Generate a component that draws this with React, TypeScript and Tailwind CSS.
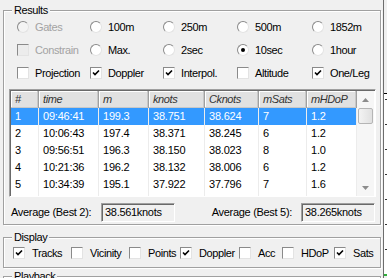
import React from "react";

const font = "font-['Liberation_Sans',Arial,sans-serif]";

const Check = ({ on, disabled }: { on?: boolean; disabled?: boolean }) => (
    <span
        className={`flex h-[12px] w-[12px] shrink-0 items-center justify-center border border-t-[#8a8a8a] border-l-[#8a8a8a] border-b-[#e3e3e3] border-r-[#e3e3e3] ${
            disabled ? "bg-[#ececec]" : "bg-white"
        }`}
    >
        {on && (
            <svg width="8" height="8" viewBox="0 0 8 8">
                <path d="M1 3.5 L3 5.5 L7 1.5" stroke="#000" strokeWidth="1.6" fill="none" />
            </svg>
        )}
    </span>
);

const Radio = ({ on, disabled }: { on?: boolean; disabled?: boolean }) => (
    <span
        className={`flex h-[12px] w-[12px] shrink-0 items-center justify-center rounded-full border border-t-[#8a8a8a] border-l-[#8a8a8a] border-b-[#e3e3e3] border-r-[#e3e3e3] ${
            disabled ? "bg-[#f4f4f4]" : "bg-white"
        }`}
    >
        {on && <span className="h-[4px] w-[4px] rounded-full bg-black" />}
    </span>
);

type Opt = { label: string; kind: "radio" | "check"; on?: boolean; disabled?: boolean };

const options: Opt[] = [
    { label: "Gates", kind: "radio", disabled: true },
    { label: "100m", kind: "radio" },
    { label: "250m", kind: "radio" },
    { label: "500m", kind: "radio" },
    { label: "1852m", kind: "radio" },
    { label: "Constrain", kind: "check", disabled: true },
    { label: "Max.", kind: "radio" },
    { label: "2sec", kind: "radio" },
    { label: "10sec", kind: "radio", on: true },
    { label: "1hour", kind: "radio" },
    { label: "Projection", kind: "check" },
    { label: "Doppler", kind: "check", on: true },
    { label: "Interpol.", kind: "check", on: true },
    { label: "Altitude", kind: "check" },
    { label: "One/Leg", kind: "check", on: true },
];

const columns = [
    { name: "#", w: "w-[28px]" },
    { name: "time", w: "w-[60px]" },
    { name: "m", w: "w-[50px]" },
    { name: "knots", w: "w-[56px]" },
    { name: "Cknots", w: "w-[54px]" },
    { name: "mSats", w: "w-[48px]" },
    { name: "mHDoP", w: "w-[50px]" },
];

const rows = [
    ["1", "09:46:41", "199.3", "38.751", "38.624", "7", "1.2"],
    ["2", "10:06:43", "197.4", "38.371", "38.245", "6", "1.2"],
    ["3", "09:56:51", "196.3", "38.150", "38.023", "8", "1.0"],
    ["4", "10:21:36", "196.2", "38.132", "38.006", "6", "1.2"],
    ["5", "10:34:39", "195.1", "37.922", "37.796", "7", "1.6"],
];

const display = [
    { label: "Tracks", on: true, w: "w-[58px]" },
    { label: "Vicinity", w: "w-[58px]" },
    { label: "Points", w: "w-[51px]" },
    { label: "Doppler", on: true, w: "w-[59px]" },
    { label: "Acc", w: "w-[43px]" },
    { label: "HDoP", w: "w-[52px]" },
    { label: "Sats", on: true, w: "w-[46px]" },
];

const groupBox =
    "border border-[#a0a0a0] shadow-[inset_1px_1px_0_#fff,1px_1px_0_#fff]";
const legend = "ml-[8px] bg-[#f0f0f0] px-[2px] leading-[14px]";

const ReadOnlyBox = ({ value }: { value: string }) => (
    <div className="flex h-[19px] w-[74px] items-center border border-t-[#a0a0a0] border-l-[#a0a0a0] border-b-white border-r-white bg-[#f0f0f0] pl-[3px] shadow-[inset_1px_1px_0_#696969]">
        {value}
    </div>
);

export default function App() {
    return (
        <div
            className={`flex h-[278px] w-[387px] overflow-hidden bg-[#f0f0f0] text-[11px] tracking-[-0.4px] text-black ${font}`}
        >
            <div className="flex w-[382px] shrink-0 flex-col pl-[3px] pr-[1px]">
                {/* Results */}
                <fieldset className={`mt-[3px] pb-[2px] ${groupBox}`}>
                    <legend className={legend}>Results</legend>
                    <div className="grid grid-cols-[73px_73px_74px_75px_1fr] gap-y-[3px] pl-[13px]">
                        {options.map((o) => (
                            <div key={o.label} className="flex h-[20px] items-center gap-[6px]">
                                {o.kind === "radio" ? (
                                    <Radio on={o.on} disabled={o.disabled} />
                                ) : (
                                    <Check on={o.on} disabled={o.disabled} />
                                )}
                                <span className={o.disabled ? "text-[#a3a3a3]" : ""}>{o.label}</span>
                            </div>
                        ))}
                    </div>

                    <div className="ml-[5px] mt-[6px] flex h-[108px] w-[367px] flex-col border border-t-[#a0a0a0] border-l-[#a0a0a0] border-b-white border-r-white bg-white shadow-[inset_1px_1px_0_#696969]">
                        <div className="flex h-full pl-[1px] pt-[1px]">
                            <div className="flex flex-col">
                                <div className="flex h-[17px] bg-[#e1e1e1]">
                                    {columns.map((c) => (
                                        <div
                                            key={c.name}
                                            className={`${c.w} flex items-center border-r border-r-[#a0a0a0] pl-[4px] italic text-[#333] shadow-[inset_-1px_-1px_0_#c8c8c8,inset_1px_1px_0_#fff]`}
                                        >
                                            {c.name}
                                        </div>
                                    ))}
                                </div>
                                <div className="flex flex-1 flex-col">
                                    {rows.map((r, i) => (
                                        <div
                                            key={r[0]}
                                            className={`flex h-[17px] ${i === 0 ? "bg-[#3399ff] text-white" : ""}`}
                                        >
                                            {r.map((v, j) => (
                                                <div
                                                    key={j}
                                                    className={`${columns[j].w} flex items-center border-r border-r-[#ececec] pl-[4px] tracking-[-0.2px]`}
                                                >
                                                    {v}
                                                </div>
                                            ))}
                                        </div>
                                    ))}
                                    <div className="flex flex-1">
                                        {columns.map((c) => (
                                            <div key={c.name} className={`${c.w} border-r border-r-[#ececec]`} />
                                        ))}
                                    </div>
                                </div>
                            </div>
                            {/* scrollbar */}
                            <div className="flex w-[17px] flex-col bg-[#f6f6f6]">
                                <div className="flex h-[17px] items-center justify-center">
                                    <svg width="7" height="4" viewBox="0 0 7 4">
                                        <path d="M0 4 L3.5 0 L7 4 Z" fill="#8c8c8c" />
                                    </svg>
                                </div>
                                <div className="mx-[1px] h-[16px] rounded-[2px] border border-[#b5b5b5] bg-gradient-to-r from-[#f3f3f3] to-[#e0e0e0]" />
                                <div className="flex-1" />
                                <div className="flex h-[17px] items-center justify-center">
                                    <svg width="7" height="4" viewBox="0 0 7 4">
                                        <path d="M0 0 L3.5 4 L7 0 Z" fill="#8c8c8c" />
                                    </svg>
                                </div>
                            </div>
                        </div>
                    </div>

                    <div className="mt-[6px] flex h-[19px] items-center pl-[7px] pr-[5px] tracking-[-0.3px]">
                        <span className="w-[90px]">Average (Best 2):</span>
                        <ReadOnlyBox value="38.561knots" />
                        <span className="ml-auto mr-[9px]">Average (Best 5):</span>
                        <ReadOnlyBox value="38.265knots" />
                    </div>
                </fieldset>

                {/* Display */}
                <fieldset className={`mt-[5px] pb-[5px] ${groupBox}`}>
                    <legend className={legend}>Display</legend>
                    <div className="flex h-[18px] items-center pl-[9px]">
                        {display.map((d) => (
                            <div key={d.label} className={`flex items-center gap-[7px] ${d.w}`}>
                                <Check on={d.on} />
                                <span>{d.label}</span>
                            </div>
                        ))}
                    </div>
                </fieldset>

                {/* Playback */}
                <fieldset className={`mt-[1px] h-[40px] shrink-0 ${groupBox}`}>
                    <legend className={legend}>Playback</legend>
                </fieldset>
            </div>

            {/* neighbouring control, clipped */}
            <div className="flex w-[5px] shrink-0 pl-[1px]">
                <div className="flex w-full flex-col border-l border-l-[#6d6d6d]">
                    <div className="h-[106px]" />
                    <div className="flex flex-1 flex-col border-t border-t-black bg-white pt-[5px]">
                        {[0, 1, 2, 3, 4, 5, 6].map((i) => (
                            <div key={i} className="mb-[24px] ml-[1px] h-[1px] w-[3px] bg-[#333]" />
                        ))}
                    </div>
                    <div className="h-[2px] bg-[#2fae3a]" />
                    <div className="h-[2px]" />
                </div>
            </div>
        </div>
    );
}
